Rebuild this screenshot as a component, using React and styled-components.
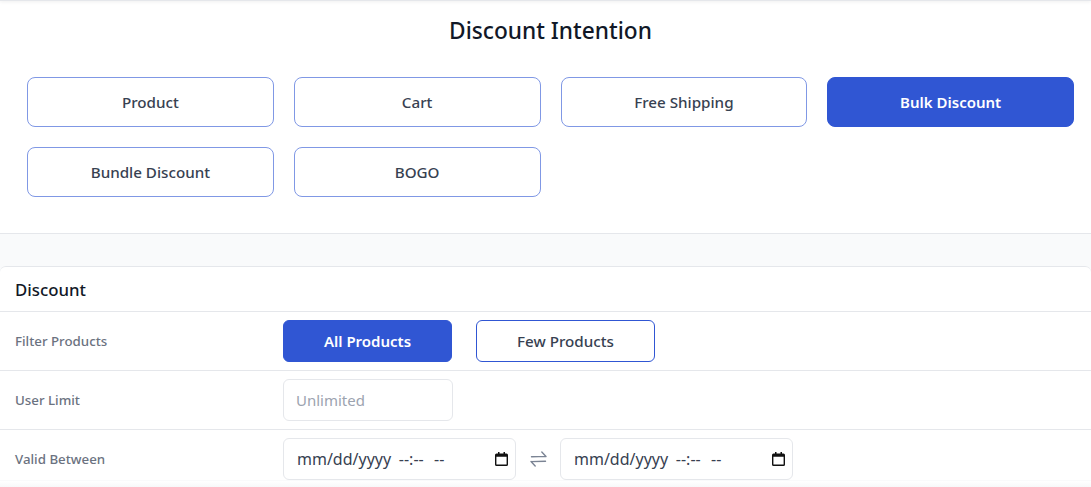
import React from "react";
import styled, { createGlobalStyle } from "styled-components";

const Global = createGlobalStyle`
  html, body { margin: 0; padding: 0; background: #f9fafb; }
  body { font-family: "Noto Sans", "Open Sans", Arial, sans-serif; overflow: hidden; }
  * { box-sizing: border-box; }
`;

const Page = styled.div`
  width: 1091px;
  height: 487px;
  overflow: hidden;
  position: relative;
  background: #f9fafb;
`;

const TopShade = styled.div`
  position: absolute;
  top: 0; left: 0; right: 0;
  height: 1px;
  background: #e5e7eb;
  box-shadow: 0 1px 3px rgba(0,0,0,.12);
`;

const Intent = styled.section`
  height: 234px;
  background: #fff;
  border-bottom: 1px solid #e5e7eb;
  padding: 13px 17px 0 27px;
`;

const Title = styled.h2`
  margin: 0;
  height: 36px;
  line-height: 36px;
  text-align: center;
  font-size: 22.7px;
  font-weight: 500;
  color: #111827;
`;

const Choices = styled.div`
  margin-top: 28px;
  display: grid;
  grid-template-columns: repeat(4, 1fr);
  grid-auto-rows: 50px;
  gap: 20px;
`;

const Choice = styled.button`
  font: inherit;
  font-size: ${p => (p.$active ? "15px" : "15.2px")};
  border-radius: 8px;
  padding: 0;
  cursor: pointer;
  border: 1px solid ${p => (p.$active ? "#3056d3" : "#8098e5")};
  background: ${p => (p.$active ? "#3056d3" : "#fff")};
  color: ${p => (p.$active ? "#fff" : "#374151")};
  font-weight: ${p => (p.$active ? 600 : 500)};
`;

const Card = styled.section`
  margin-top: 32px;
  background: #fff;
  border-top: 1px solid #e5e7eb;
  border-radius: 6px 6px 0 0;
`;

const CardHead = styled.h3`
  margin: 0;
  height: 45px;
  line-height: 46px;
  padding-left: 15px;
  font-size: 16.8px;
  font-weight: 500;
  color: #111827;
  border-bottom: 1px solid #e5e7eb;
`;

const Row = styled.div`
  display: flex;
  align-items: center;
  height: 59px;
  padding: 0 0 0 15px;
  border-bottom: 1px solid #e5e7eb;
  &:last-child { border-bottom: 0; height: 50px; align-items: flex-start; padding-top: 8px; }
`;

const Label = styled.label`
  width: 268px;
  flex: none;
  font-size: 13.3px;
  font-weight: 500;
  color: #6b7280;
  ${p => p.$top && "line-height: 42px;"}
`;

const Toggle = styled.button`
  font: inherit;
  font-size: ${p => (p.$active ? "15px" : "15.2px")};
  width: ${p => p.$w}px;
  height: 42px;
  margin-right: 24px;
  border-radius: 6px;
  padding: 0;
  cursor: pointer;
  border: 1px solid #3056d3;
  background: ${p => (p.$active ? "#3056d3" : "#fff")};
  color: ${p => (p.$active ? "#fff" : "#374151")};
  font-weight: ${p => (p.$active ? 600 : 500)};
`;

const TextInput = styled.input`
  width: 170px;
  height: 42px;
  padding: 0 12px;
  font: inherit;
  font-size: 15px;
  border: 1px solid #e5e7eb;
  border-radius: 6px;
  background: #fff;
  color: #374151;
  &::placeholder { color: #9ca3af; opacity: 1; }
`;

const DateField = styled.div`
  width: 233px;
  height: 42px;
  padding: 0 7px 0 13px;
  display: flex;
  align-items: center;
  justify-content: space-between;
  font-size: 16px;
  word-spacing: 3.5px;
  border: 1px solid #e5e7eb;
  border-radius: 6px;
  background: #fff;
  color: #374151;
  white-space: pre;
`;

const DateIcon = styled.svg`
  width: 13px;
  height: 14px;
  flex: none;
`;

const Swap = styled.span`
  width: 44px;
  height: 42px;
  display: flex;
  align-items: center;
  justify-content: center;
  color: #7b8494;
`;

const SwapIcon = () => (
  <svg width="17" height="16" viewBox="0 0 17 16" fill="none" stroke="currentColor" strokeWidth="1.4" strokeLinecap="round" strokeLinejoin="round">
    <path d="M1.5 5.8L16 5.4M11.8 1L16 5.4" />
    <path d="M15.5 10.2L1 10.6M5.2 15L1 10.6" />
  </svg>
);

const CalendarIcon = () => (
  <DateIcon viewBox="0 0 13 14">
    <path
      fill="#111"
      fillRule="evenodd"
      d="M3 0h1.5v1.5h4V0H10v1.5h1.5A1.5 1.5 0 0 1 13 3v9.5a1.5 1.5 0 0 1-1.5 1.5h-10A1.5 1.5 0 0 1 0 12.5V3a1.5 1.5 0 0 1 1.5-1.5H3V0zM1.4 4.8v7.8h10.2V4.8H1.4z"
    />
  </DateIcon>
);

const Foot = styled.div`
  position: absolute;
  left: 0; right: 0; bottom: 0;
  height: 6px;
  background: linear-gradient(#fff, #f7f8f9);
`;

const DATE_MASK = "mm/dd/yyyy --:--\u2009 --";

export default function App() {
  return (
    <Page>
      <Global />
      <TopShade />
      <Intent>
        <Title>Discount Intention</Title>
        <Choices>
          <Choice>Product</Choice>
          <Choice>Cart</Choice>
          <Choice>Free Shipping</Choice>
          <Choice $active>Bulk Discount</Choice>
          <Choice>Bundle Discount</Choice>
          <Choice>BOGO</Choice>
        </Choices>
      </Intent>
      <Card>
        <CardHead>Discount</CardHead>
        <Row>
          <Label>Filter Products</Label>
          <Toggle $active $w={169}>All Products</Toggle>
          <Toggle $w={179}>Few Products</Toggle>
        </Row>
        <Row>
          <Label>User Limit</Label>
          <TextInput placeholder="Unlimited" />
        </Row>
        <Row>
          <Label $top>Valid Between</Label>
          <DateField>{DATE_MASK}<CalendarIcon /></DateField>
          <Swap><SwapIcon /></Swap>
          <DateField>{DATE_MASK}<CalendarIcon /></DateField>
        </Row>
      </Card>
      <Foot />
    </Page>
  );
}
